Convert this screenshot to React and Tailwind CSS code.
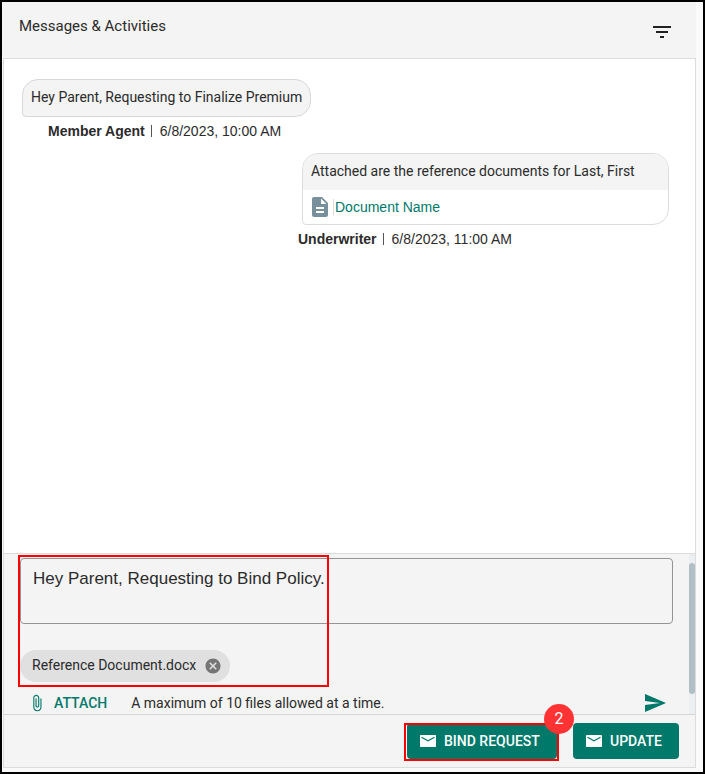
import React from "react";

const ROBOTO = "font-[Roboto,'Liberation_Sans',sans-serif]";

function MailIcon() {
  return (
    <svg viewBox="0 0 16 12" className="h-3 w-4 shrink-0" fill="none" aria-hidden="true">
      <rect width="16" height="12" rx="0.8" fill="currentColor" />
      <path d="M1.500 2.200 8 5.800l6.500-3.600" stroke="#00796b" strokeWidth="1.200" />
    </svg>
  );
}

function Header() {
  return (
    <header className="flex h-14 items-start justify-between bg-[#f4f4f4] pr-[22px] pl-[17px]">
      <h1 className="pt-3 text-[15px] leading-6">Messages &amp; Activities</h1>
      <button type="button" aria-label="Filter messages" className="mt-[18px]">
        <svg viewBox="0 0 24 24" className="size-6" fill="#212121" shapeRendering="crispEdges" aria-hidden="true">
          <path d="M10 18h4v-2h-4zM3 6v2h18V6zm3 7h12v-2H6z" />
        </svg>
      </button>
    </header>
  );
}

function Byline({ name, time, className }) {
  return (
    <p className={"flex items-center text-[14px] leading-5 font-['Liberation_Sans',Arial,sans-serif] " + className}>
      <strong className="font-bold">{name}</strong>
      <span className="mr-2 ml-1.5 h-3 w-px bg-[#555]" />
      <time>{time}</time>
    </p>
  );
}

function Messages() {
  return (
    <section className="flex-1 border-y border-[#dcdcdc] bg-white px-[18px] pt-5">
      <p className="w-fit rounded-2xl rounded-bl-[4px] border border-[#d8d8d8] bg-[#f4f4f4] px-2 pb-0.5 text-[14px] leading-[34px]">
        Hey Parent, Requesting to Finalize Premium
      </p>
      <Byline className="mt-1 ml-[26px]" name="Member Agent" time="6/8/2023, 10:00 AM" />
      <div className="mt-3 mr-2 ml-auto w-[367px] overflow-hidden rounded-2xl rounded-bl-[4px] border border-[#dcdcdc]">
        <p className="bg-[#f4f4f4] px-2 pb-0.5 text-[14px] leading-[34px]">
          Attached are the reference documents for Last, First
        </p>
        <a href="#document" className="flex h-[34px] items-center px-[5px] text-[14px] text-[#00796b] font-['Liberation_Sans',Arial,sans-serif]">
          <svg viewBox="0 0 24 24" className="size-6" fill="#78909c" aria-hidden="true">
            <path d="M14 2H6c-1.100 0-2 .9-2 2v16c0 1.100.9 2 2 2h12c1.100 0 2-.9 2-2V8zm2 16H8v-2h8zm0-4H8v-2h8zm-3-5V3.500L18.500 9z" />
          </svg>
          <span className="ml-px border-l border-[#ddd] pl-px leading-4">Document Name</span>
        </a>
      </div>
      <Byline className="mt-1 ml-auto w-[379px]" name="Underwriter" time="6/8/2023, 11:00 AM" />
    </section>
  );
}

function Composer() {
  return (
    <section className="flex h-40 justify-between bg-[#f4f4f4]">
      <div className="relative min-w-0 flex-1 pt-1 pr-4 pl-4">
        <textarea
          aria-label="Message"
          defaultValue="Hey Parent, Requesting to Bind Policy."
          className="block h-[66px] w-full resize-none rounded-[4px] border border-[#949494] bg-transparent px-3 py-2 text-[17px] leading-6 outline-none font-['Liberation_Sans',Arial,sans-serif]"
        />
        <div className="mt-[26px] flex h-8 w-[210px] items-center justify-between rounded-full bg-[#e0e0e0] pr-2 pl-3 text-[14px]">
          <span className="pb-0.5">Reference Document.docx</span>
          <button type="button" aria-label="Remove Reference Document.docx">
            <svg viewBox="0 0 24 24" className="size-[18px]" fill="#757575" aria-hidden="true">
              <path d="M12 2C6.470 2 2 6.470 2 12s4.470 10 10 10 10-4.470 10-10S17.530 2 12 2zm5 13.590L15.590 17 12 13.410 8.410 17 7 15.590 10.590 12 7 8.410 8.410 7 12 10.590 15.590 7 17 8.410 13.410 12z" />
            </svg>
          </button>
        </div>
        <div className="mt-[9px] flex h-6 items-center pl-2 text-[14px]">
          <button type="button" className="flex items-center gap-2 font-medium text-[#00796b]">
            <svg viewBox="0 0 24 24" className="size-[18px]" fill="currentColor" aria-hidden="true">
              <path d="M16.500 6v11.500c0 2.210-1.790 4-4 4s-4-1.790-4-4V5c0-1.380 1.120-2.500 2.500-2.500s2.500 1.120 2.500 2.500v10.500c0 .55-.45 1-1 1s-1-.45-1-1V6H10v9.500c0 1.380 1.120 2.500 2.500 2.500s2.500-1.120 2.500-2.500V5c0-2.210-1.790-4-4-4S7 2.790 7 5v12.500c0 3.040 2.460 5.500 5.500 5.500s5.500-2.460 5.500-5.500V6z" />
            </svg>
            ATTACH
          </button>
          <span className="ml-6">A maximum of 10 files allowed at a time.</span>
          <button type="button" aria-label="Send message" className="mr-1.5 ml-auto text-[#00796b]">
            <svg viewBox="0 0 24 24" className="size-6" fill="currentColor" aria-hidden="true">
              <path d="M2.010 21 23 12 2.010 3 2 10l15 2-15 2z" />
            </svg>
          </button>
        </div>
        <div className="pointer-events-none absolute top-px left-[14px] h-[132px] w-[311px] border-2 border-[#ff0000]" />
      </div>
      <div className="w-1.5 bg-[#eceff1] pt-[9px]">
        <div className="h-[131px] rounded-full bg-[#b0bec5]" />
      </div>
    </section>
  );
}

function Footer() {
  const button = "flex h-9 items-center gap-2 rounded-[4px] bg-[#00796b] pl-[13px] text-[14px] font-medium text-white";
  return (
    <footer className="flex h-[53px] items-start justify-end gap-4 border-t border-[#d5d5d5] bg-[#f4f4f4] pt-2 pr-4">
      <div className="relative">
        <button type="button" className={button + " w-[150px]"}>
          <MailIcon />
          BIND REQUEST
        </button>
        <div className="pointer-events-none absolute top-0 -left-[3px] h-[38px] w-[155px] border-2 border-[#ff0000]" />
        <span className="absolute -top-[19px] -right-[17px] flex size-[30px] items-center justify-center rounded-full bg-[#ff3333] text-[16px] text-white">
          2
        </span>
      </div>
      <button type="button" className={button + " w-[106px]"}>
        <MailIcon />
        UPDATE
      </button>
    </footer>
  );
}

export default function App() {
  return (
    <div className={"flex min-h-screen flex-col border-2 border-black bg-[#fafafa] pr-[7px] pb-1 text-[#2b2b2b] " + ROBOTO}>
      <Header />
      <main className="ml-px flex flex-1 flex-col border-x border-b border-[#dcdcdc]">
        <Messages />
        <Composer />
        <Footer />
      </main>
    </div>
  );
}
